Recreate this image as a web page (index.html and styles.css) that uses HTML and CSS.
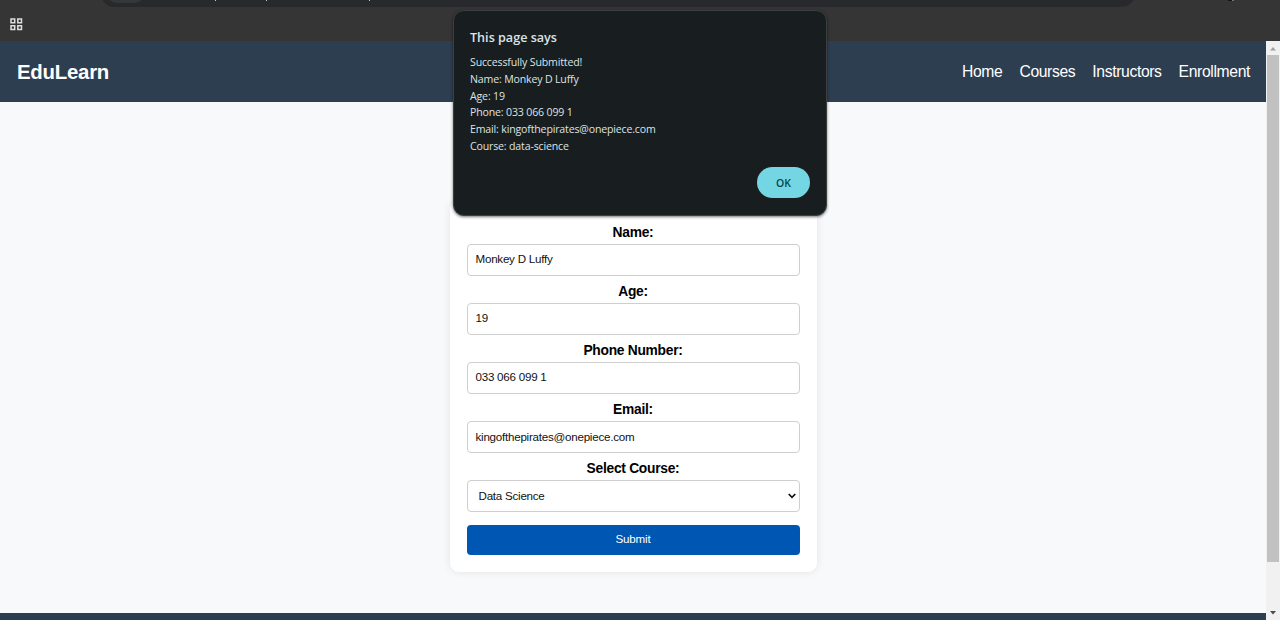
FILE: index.html
```html
<!DOCTYPE html>
<html lang="en">
<head>
<meta charset="utf-8">
<title>EduLearn</title>
<link rel="stylesheet" href="styles.css">
</head>
<body>
<div class="browser">
  <div class="toolbar">
    <div class="omnibox"><div class="chip"></div><i class="speck s1"></i><i class="speck s2"></i><i class="speck s3"></i></div>
    <i class="speck ext"></i>
    <svg class="apps" width="13" height="13" viewBox="0 0 13 13" fill="none" stroke="#dedede" stroke-width="1.5"><path d="M1 1h3.7v3.7H1zM7.8 1h3.7v3.7H7.8zM1 7.8h3.7v3.7H1zM7.8 7.8h3.7v3.7H7.8z"/></svg>
  </div>
  <div class="viewport">
    <div class="page">
      <header class="header">
        <div class="logo">EduLearn</div>
        <nav class="nav"><a>Home</a><a>Courses</a><a>Instructors</a><a>Enrollment</a></nav>
      </header>
      <main class="main">
        <form class="card">
          <label class="label">Name:</label>
          <div class="field">Monkey D Luffy</div>
          <label class="label">Age:</label>
          <div class="field">19</div>
          <label class="label">Phone Number:</label>
          <div class="field">033 066 099 1</div>
          <label class="label">Email:</label>
          <div class="field">kingofthepirates@onepiece.com</div>
          <label class="label">Select Course:</label>
          <div class="field select"><span>Data Science</span><svg width="8" height="6" viewBox="0 0 8 6" fill="none" stroke="#111" stroke-width="1.7"><path d="M.7 1L4 4.3 7.3 1"/></svg></div>
          <button class="submit" type="button">Submit</button>
        </form>
      </main>
      <footer class="footer"></footer>
    </div>
    <div class="scrollbar">
      <svg class="arrow" width="14" height="14" viewBox="0 0 14 14"><path d="M4 9.5h6L7 6z" fill="#a0a0a0"/></svg>
      <div class="thumb"></div>
      <svg class="arrow" width="14" height="14" viewBox="0 0 14 14"><path d="M4 5h6L7 8.5z" fill="#4d4d4d"/></svg>
    </div>
  </div>
</div>
<div class="dialog">
  <div class="dialog-title">This page says</div>
  <div class="dialog-text">
    <p>Successfully Submitted!</p>
    <p>Name: Monkey D Luffy</p>
    <p>Age: 19</p>
    <p>Phone: 033 066 099 1</p>
    <p>Email: kingofthepirates@onepiece.com</p>
    <p>Course: data-science</p>
  </div>
  <button class="ok" type="button">OK</button>
</div>
</body>
</html>
```

FILE: styles.css
```css
* { box-sizing: border-box; }
body { margin: 0; font-family: "Liberation Sans", Arial, sans-serif; }
.browser { display: flex; flex-direction: column; height: 620px; overflow: hidden; }
.toolbar { position: relative; height: 41px; flex: none; background: #353535; overflow: hidden; }
.omnibox { position: relative; height: 27px; width: 1034px; margin: -20px 0 0 101px; border-radius: 14px; background: #28292d; }
.chip { position: absolute; left: 5px; top: 0; width: 39px; height: 23px; border-radius: 11px; background: #353638; }
.speck { position: absolute; top: 20px; width: 1px; height: 1px; background: #c8c8c8; }
.s1 { left: 114px; }
.s2 { left: 165px; }
.s3 { left: 268px; }
.ext { left: 1228px; top: 0; width: 6px; background: #151515; border-right: 2px solid #777; }
.apps { display: block; margin: 11px 0 0 10px; }
.viewport { display: flex; flex: 1; min-height: 0; }
.page { flex: 1; display: flex; flex-direction: column; background: #f8f9fb; }
.header { height: 61px; flex: none; background: #2d3e50; color: #fff; display: flex; align-items: center; justify-content: space-between; padding: 0 16px 0 17px; }
.logo { font-size: 20.4px; font-weight: bold; letter-spacing: -.25px; padding-top: 1px; }
.nav { display: flex; gap: 17px; font-size: 15.7px; letter-spacing: -.36px; }
.main { flex: 1; display: flex; justify-content: center; align-items: flex-end; padding-bottom: 41.5px; }
.card { width: 367px; height: 371px; padding: 24px 17px 0; background: #fff; border-radius: 9px; box-shadow: 0 0 9px rgba(0, 0, 0, .09); display: flex; flex-direction: column; }
.label { font-size: 13.8px; line-height: 15px; font-weight: bold; letter-spacing: -.27px; text-align: center; margin-bottom: 4.5px; color: #000; }
.field { height: 31.5px; border: 1px solid #cfcfcf; border-radius: 4px; padding: 0 8px 2px; font-size: 11.6px; letter-spacing: -.24px; display: flex; align-items: center; color: #111; margin-bottom: 8.1px; background: #fff; }
.select { justify-content: space-between; padding: 0 3px 1px 11px; margin-bottom: 13px; }
.select svg { margin-top: 1px; }
.submit { height: 30px; flex: none; border: 0; border-radius: 4px; background: #0056b3; color: #fff; font: 11.6px "Liberation Sans", Arial, sans-serif; letter-spacing: -.2px; padding: 0 0 3px; }
.footer { height: 7px; flex: none; background: #2d3e50; }
.scrollbar { width: 14px; flex: none; background: #f1f1f1; display: flex; flex-direction: column; align-items: center; }
.thumb { width: 12px; height: 507px; background: #c1c1c1; margin-bottom: auto; }
.arrow { flex: none; display: block; }
.dialog { position: absolute; left: 453px; top: 10px; width: 374px; height: 206px; border: 1px solid #3b3f40; border-radius: 11px; background: #181d1f; color: #dde3e5; padding: 18px 16px; display: flex; flex-direction: column; font-family: "Open Sans", "Noto Sans", sans-serif; box-shadow: 0 1px 3px rgba(0, 0, 0, .55); }
.dialog-title { font-size: 12.6px; line-height: 18px; font-weight: 600; margin-bottom: 7.3px; }
.dialog-text { font-size: 10.6px; line-height: 16.67px; letter-spacing: -.17px; }
.dialog-text p { margin: 0; white-space: nowrap; }
.ok { width: 53px; height: 31px; margin: 12.2px 0 0; flex: none; align-self: flex-end; border: 0; border-radius: 16px; background: #74d5e3; color: #07464f; font: 600 10.5px "Open Sans", sans-serif; padding: 1px 0 0; }
```
